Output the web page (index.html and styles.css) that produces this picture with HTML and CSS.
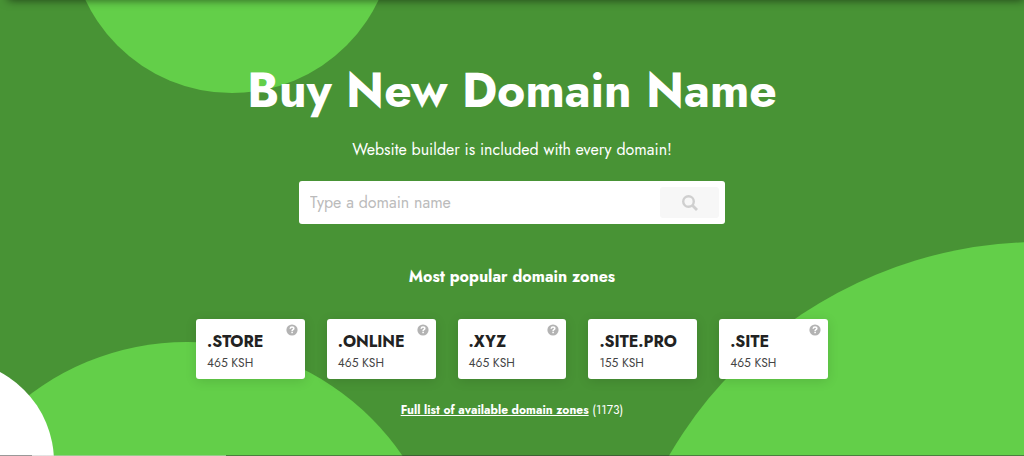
FILE: index.html
```html
<!DOCTYPE html>
<html lang="en">
<head>
    <meta charset="UTF-8">
    <meta name="viewport" content="width=device-width, initial-scale=1">
    <title>Buy New Domain Name</title>
    <link rel="stylesheet" href="styles.css">
</head>
<body>
    <svg class="sprite" width="0" height="0" aria-hidden="true">
        <symbol id="icon-help" viewBox="0 0 12 12">
            <circle cx="6" cy="6" r="5.6" fill="#b3b3b3"/>
            <path d="M4.2 4.7C4.3 3.5 5 3 6 3c1.1 0 1.8.6 1.8 1.5C7.8 5.7 6.1 5.7 6.1 7" fill="none" stroke="#fff" stroke-width="1.6"/>
            <rect x="5.3" y="7.7" width="1.6" height="1.5" fill="#fff"/>
        </symbol>
    </svg>

    <main class="hero">
        <div class="circle circle-top"></div>
        <div class="circle circle-left"></div>
        <div class="circle circle-white"></div>
        <div class="circle circle-right"></div>

        <div class="content">
            <h1>Buy New Domain Name</h1>
            <p class="subtitle">Website builder is included with every domain!</p>

            <form class="search">
                <input type="text" placeholder="Type a domain name" aria-label="Domain name">
                <button type="submit" aria-label="Search">
                    <svg width="16" height="16" viewBox="0 0 16 16" fill="none" stroke="#cfcfcf">
                        <circle cx="6.5" cy="6.5" r="5.3" stroke-width="2.4"/>
                        <path d="M10.5 10.5L15 15" stroke-width="2.8"/>
                    </svg>
                </button>
            </form>

            <h2>Most popular domain zones</h2>

            <ul class="zones">
                <li class="zone">
                    <strong>.STORE</strong>
                    <span>465 KSH</span>
                    <svg class="help"><use href="#icon-help"/></svg>
                </li>
                <li class="zone">
                    <strong>.ONLINE</strong>
                    <span>465 KSH</span>
                    <svg class="help"><use href="#icon-help"/></svg>
                </li>
                <li class="zone">
                    <strong>.XYZ</strong>
                    <span>465 KSH</span>
                    <svg class="help"><use href="#icon-help"/></svg>
                </li>
                <li class="zone">
                    <strong>.SITE.PRO</strong>
                    <span>155 KSH</span>
                </li>
                <li class="zone">
                    <strong>.SITE</strong>
                    <span>465 KSH</span>
                    <svg class="help"><use href="#icon-help"/></svg>
                </li>
            </ul>

            <p class="full-list"><a href="#">Full list of available domain zones</a> (1173)</p>
        </div>
    </main>
</body>
</html>
```
FILE: styles.css
```css
* {
    box-sizing: border-box;
}
body {
    margin: 0;
    font-family: Jost, Lato, sans-serif;
    color: #fff;
}
.sprite {
    position: absolute;
}
.hero {
    position: relative;
    min-height: 100vh;
    padding: 59px 20px 36px;
    overflow: hidden;
    background: #489335;
}
/* shadow of the header above */
.hero::before {
    content: "";
    position: absolute;
    top: -10px;
    left: 8px;
    right: 0;
    height: 10px;
    box-shadow: 0 0 10px rgba(0, 0, 0, 0.6);
    z-index: 1;
}
/* thin line along the bottom edge */
.hero::after {
    content: "";
    position: absolute;
    bottom: 0;
    left: 0;
    right: 0;
    height: 1px;
    background: linear-gradient(to right, #999 32px, rgba(200, 200, 200, 0.5) 32px, rgba(200, 200, 200, 0.5) 226px, rgba(50, 50, 50, 0.5) 226px);
}
.circle {
    position: absolute;
    border-radius: 50%;
    background: #63cf49;
}
.circle-top {
    width: 324px;
    height: 324px;
    left: 70px;
    top: -231px;
}
.circle-left {
    width: 522px;
    height: 522px;
    left: -74px;
    top: 342px;
}
.circle-white {
    width: 204px;
    height: 204px;
    left: -150px;
    top: 360px;
    background: #fff;
}
.circle-right {
    width: 858px;
    height: 858px;
    right: -445px;
    top: 242px;
}
.content {
    position: relative;
    max-width: 632px;
    margin: 0 auto;
    text-align: center;
}
h1 {
    margin: 0;
    font-size: 48px;
    font-weight: 700;
    line-height: 64px;
}
.subtitle {
    margin: 15px 0 19px;
    font-size: 16px;
    line-height: 24px;
}
.search {
    display: flex;
    max-width: 426px;
    margin: 0 auto;
    padding: 6px;
    background: #fff;
    border-radius: 3px;
}
.search input {
    flex: 1;
    min-width: 0;
    padding: 0 5px;
    border: 0;
    outline: 0;
    background: none;
    font-family: inherit;
    font-size: 16px;
    color: #222;
}
.search input::placeholder {
    color: #bbb;
}
.search button {
    display: flex;
    align-items: center;
    justify-content: center;
    width: 59px;
    height: 31px;
    border: 0;
    border-radius: 3px;
    background: #f7f7f7;
}
h2 {
    margin: 41px 0 30px;
    font-size: 16px;
    font-weight: 700;
    line-height: 24px;
}
.zones {
    display: grid;
    grid-template-columns: repeat(5, 1fr);
    gap: 22px;
    margin: 0;
    padding: 0;
    list-style: none;
}
.zone {
    position: relative;
    display: flex;
    flex-direction: column;
    padding: 12px 11px 6px;
    background: #fff;
    border-radius: 3px;
    box-shadow: 0 2px 12px rgba(0, 0, 0, 0.12);
    text-align: left;
    color: #222;
}
.zone strong {
    font-size: 16px;
    line-height: 22px;
}
.zone span {
    font-size: 12px;
    line-height: 20px;
    color: #444;
}
.help {
    position: absolute;
    top: 5px;
    right: 7px;
    width: 12px;
    height: 12px;
}
.full-list {
    margin: 21px 0 0;
    font-size: 12px;
    line-height: 20px;
}
.full-list a {
    color: #fff;
    font-weight: 700;
}
```
